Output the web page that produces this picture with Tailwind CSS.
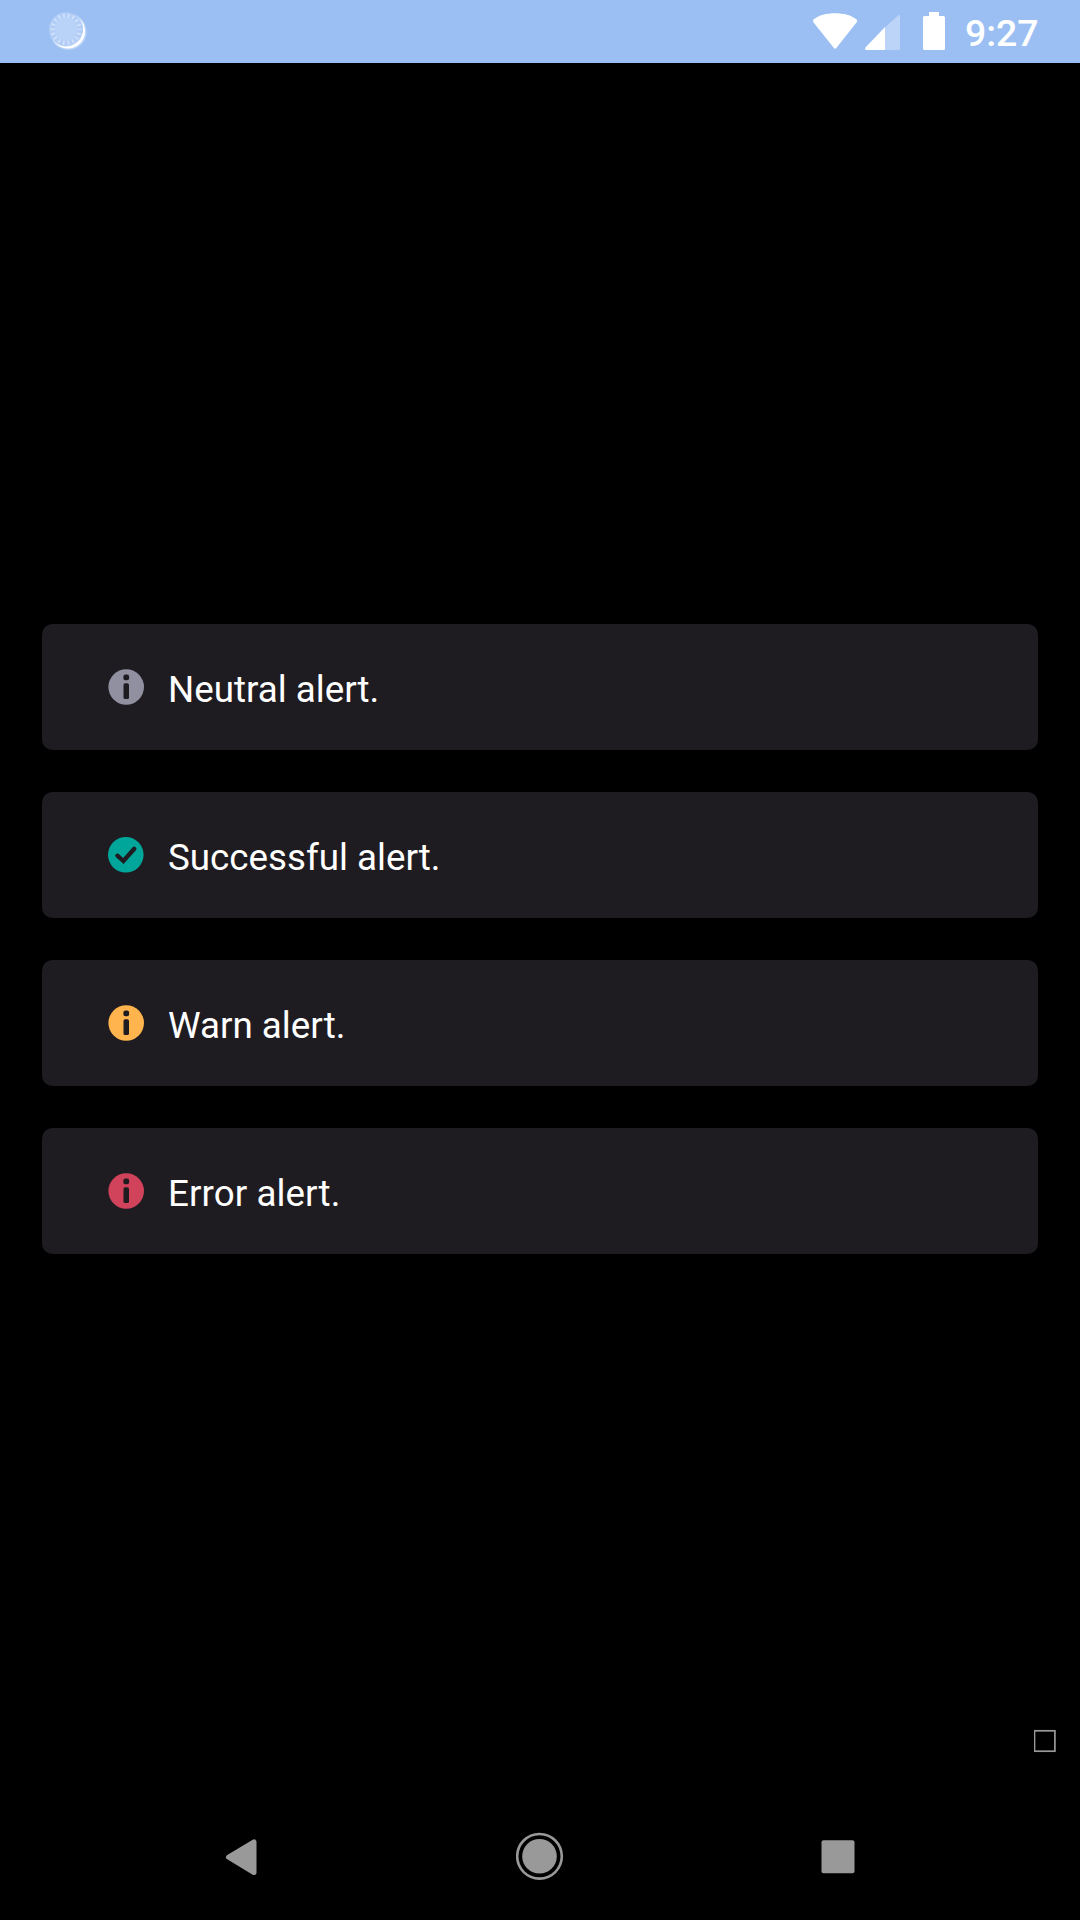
<!DOCTYPE html>
<html lang="en">
<head>
<meta charset="utf-8">
<title>Alerts</title>
<script src="https://cdn.jsdelivr.net/npm/@tailwindcss/browser@4"></script>
</head>
<body class="bg-black">
<div class="flex h-[1920px] w-[1080px] flex-col overflow-hidden bg-black font-['Roboto',sans-serif] text-white">
  <header class="flex h-[63px] shrink-0 items-start justify-between bg-[#9bbff3] pl-[48px] pr-[40px]">
    <svg class="h-[63px] w-[42px]" viewBox="48 0 42 63">
      <circle cx="68.400" cy="31.700" r="18.300" fill="#fff" fill-opacity=".3"/>
      <circle cx="67.900" cy="31.300" r="17.200" fill="#fff"/>
      <circle cx="66" cy="29.300" r="16.600" fill="#b2cdf6"/>
      <circle cx="66" cy="29.300" r="16.600" fill="none" stroke="#b2cdf6" stroke-width="1"/>
      <circle cx="66" cy="29.300" r="13.500" fill="none" stroke="#d0e1fa" stroke-width="4.500" stroke-dasharray="1.700 3.012" stroke-dashoffset="1"/>
      <circle cx="66" cy="29.300" r="11.300" fill="#b9d2f7"/>
    </svg>
    <svg class="h-[63px] w-[228px]" viewBox="812 0 228 63">
      <path d="M813.400 22.200Q812 20.600 813.800 19.300C823 11.200 847 11.200 856.400 19.300Q858 20.600 856.700 22.200L836.500 47.800Q835.100 49.600 833.700 47.800Z" fill="#fff"/>
      <path d="M898.300 15.300Q900 14.300 900 16.500V48.500Q900 50 898.500 50H885V27.500Z" fill="#bcd4f7"/>
      <path d="M885 27V50H866.500Q864.300 50 865.500 47.500Z" fill="#fff"/>
      <path d="M929 12H939V16H943.500Q945 16 945 17.500V48.500Q945 50 943.500 50H924.500Q923 50 923 48.500V17.500Q923 16 924.500 16H929Z" fill="#fff"/>
      <text x="965" y="46" font-size="37.400" font-weight="500" fill="#fff">9:27</text>
    </svg>
  </header>

  <main class="flex grow flex-col px-[42px] pt-[561px]">
    <div class="flex flex-col gap-[42px]">
      <section class="flex h-[126px] items-center rounded-[10.5px] bg-[#1f1c21] pl-[66px]">
        <svg class="size-[36px]" viewBox="0 0 36 36"><circle cx="18.2" cy="18" r="17.8" fill="#9090a1"/><rect x="15.400" y="5.500" width="5.700" height="5.700" rx="2" fill="#1f1c21"/><rect x="15.500" y="14.300" width="5.500" height="15.700" rx="1.600" fill="#1f1c21"/></svg>
        <p class="pt-1 pl-6 text-[36.75px] leading-[43px]">Neutral alert.</p>
      </section>
      <section class="flex h-[126px] items-center rounded-[10.5px] bg-[#1f1c21] pl-[66px]">
        <svg class="size-[36px]" viewBox="0 0 36 36"><circle cx="17.8" cy="17.800" r="17.8" fill="#00a699"/><path d="M9.400 18.700L15.400 24L26.300 11.800" fill="none" stroke="#1f1c21" stroke-width="4.300" stroke-linecap="round"/></svg>
        <p class="pt-1 pl-6 text-[36.75px] leading-[43px]">Successful alert.</p>
      </section>
      <section class="flex h-[126px] items-center rounded-[10.5px] bg-[#1f1c21] pl-[66px]">
        <svg class="size-[36px]" viewBox="0 0 36 36"><circle cx="18.2" cy="18" r="17.8" fill="#ffb44d"/><rect x="15.400" y="5.500" width="5.700" height="5.700" rx="2" fill="#1f1c21"/><rect x="15.500" y="14.300" width="5.500" height="15.700" rx="1.600" fill="#1f1c21"/></svg>
        <p class="pt-1 pl-6 text-[36.75px] leading-[43px]">Warn alert.</p>
      </section>
      <section class="flex h-[126px] items-center rounded-[10.5px] bg-[#1f1c21] pl-[66px]">
        <svg class="size-[36px]" viewBox="0 0 36 36"><circle cx="18.2" cy="18" r="17.8" fill="#d1435b"/><rect x="15.400" y="5.500" width="5.700" height="5.700" rx="2" fill="#1f1c21"/><rect x="15.500" y="14.300" width="5.500" height="15.700" rx="1.600" fill="#1f1c21"/></svg>
        <p class="pt-1 pl-6 text-[36.75px] leading-[43px] tracking-[0.08px]">Error alert.</p>
      </section>
    </div>
    <svg class="mt-auto -mr-6 mb-[40px] size-7 self-end" viewBox="1034 1726 28 28"><rect x="1034.500" y="1730.800" width="20.400" height="20.400" fill="none" stroke="#999" stroke-width="1.700"/></svg>
  </main>

  <nav class="flex h-[126px] shrink-0 items-start justify-between px-[217px]">
    <svg class="h-[126px] w-[48px]" viewBox="217 1794 48 126"><path d="M228.500 1857.200L254 1842V1872.500Z" fill="#999" stroke="#999" stroke-width="5" stroke-linejoin="round"/></svg>
    <svg class="h-[126px] w-[48px]" viewBox="516 1794 48 126"><circle cx="539.500" cy="1856.300" r="22.300" fill="none" stroke="#999" stroke-width="2.600"/><circle cx="539.500" cy="1856.300" r="17.300" fill="#999"/></svg>
    <svg class="h-[126px] w-[48px]" viewBox="815 1794 48 126"><rect x="821.500" y="1840.300" width="33" height="33" rx="2" fill="#999"/></svg>
  </nav>
</div>
</body>
</html>
